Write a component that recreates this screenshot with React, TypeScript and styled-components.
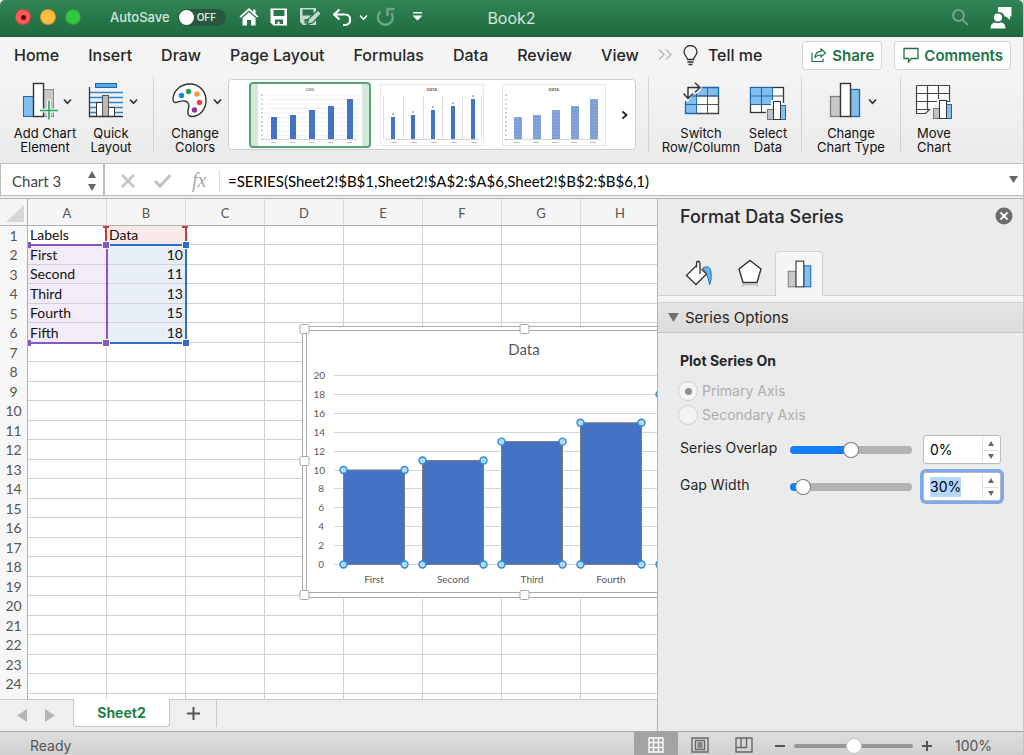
import React, { useEffect, useRef, useState } from "react";
import styled, { createGlobalStyle, css } from "styled-components";

const ui = `Inter, "Liberation Sans", sans-serif`;
const cellFont = `Lato, "Open Sans", sans-serif`;

const GlobalStyle = createGlobalStyle`
  * { box-sizing: border-box; }
  body { margin: 0; font-family: ${ui}; color: #262626; background: #ececec; }
  button, input { font: inherit; color: inherit; }
  button { padding: 0; border: 0; background: none; }
  svg { display: block; flex: none; }
`;

const Window = styled.div`
  display: flex;
  flex-direction: column;
  height: 100vh;
  border-right: 1px solid #c4c4c4;
  overflow: hidden;
`;

/* ---------- title bar ---------- */

const TitleBar = styled.header`
  display: grid;
  grid-template-columns: 1fr auto 1fr;
  align-items: center;
  flex: none;
  height: 37px;
  padding: 0 11px 2px;
  border-bottom: 1px solid #1c5a38;
  border-radius: 5px 5px 0 0;
  background: linear-gradient(#318455, #1f6a3f);
  color: #d5e6dc;
`;

const TitleGroup = styled.div<{ $end?: boolean }>`
  display: flex;
  align-items: center;
  justify-content: ${(p) => (p.$end ? "flex-end" : "flex-start")};
  gap: ${(p) => (p.$end ? 21 : 11)}px;
`;

const Lights = styled.div`
  display: flex;
  gap: 9px;
  margin: 0 18px 0 4px;
`;

const Light = styled.button<{ $color: string; $dot?: boolean }>`
  display: grid;
  place-items: center;
  width: 16px;
  height: 16px;
  border: 1px solid rgba(0, 0, 0, 0.2);
  border-radius: 50%;
  background: ${(p) => p.$color};
  &::after {
    content: "";
    width: 5px;
    height: 5px;
    border-radius: 50%;
    background: ${(p) => (p.$dot ? "#5c0a08" : "transparent")};
  }
`;

const AutoSave = styled.label`
  display: flex;
  align-items: center;
  gap: 8px;
  margin-right: 2px;
  font-size: 13px;
  font-weight: 500;
`;

const Switch = styled.span`
  position: relative;
  display: flex;
  align-items: center;
  width: 48px;
  height: 17px;
  padding-left: 19px;
  border-radius: 9px;
  background: #2a5740;
  font-size: 10px;
  font-weight: 600;
  input {
    position: absolute;
    inset: 0;
    margin: 0;
    opacity: 0;
  }
  &::before {
    content: "";
    position: absolute;
    left: 1px;
    top: 1px;
    width: 15px;
    height: 15px;
    border-radius: 50%;
    background: #fff;
  }
`;

const IconButton = styled.button`
  display: grid;
  place-items: center;
`;

const UndoGroup = styled.div`
  display: flex;
  align-items: center;
  gap: 8px;
`;

const DocTitle = styled.h1`
  margin: 0;
  padding-top: 2px;
  font-size: 16px;
  line-height: 20px;
  font-weight: 400;
`;

/* ---------- ribbon ---------- */

const TabRow = styled.nav`
  display: flex;
  align-items: center;
  flex: none;
  height: 38px;
  padding: 0 12px 2px 14px;
  background: #f4f4f4;
  font-size: 16px;
  font-weight: 500;
`;

const Tabs = styled.div`
  display: flex;
  align-items: center;
  gap: 29px;
  margin-right: 19px;
`;

const RibbonTab = styled.button`
  white-space: nowrap;
`;

const TellMe = styled.button`
  display: flex;
  align-items: center;
  gap: 10px;
  margin-left: 10px;
  white-space: nowrap;
`;

const Actions = styled.div`
  display: flex;
  gap: 12px;
  margin-left: auto;
`;

const ActionButton = styled.button`
  display: flex;
  align-items: center;
  gap: 5px;
  height: 29px;
  padding: 0 7px 0 8px;
  border: 1px solid #d4d4d4;
  border-radius: 4px;
  background: #fff;
  color: #217346;
  font-size: 15px;
  font-weight: 600;
`;

const Ribbon = styled.section`
  display: flex;
  flex: none;
  height: 89px;
  padding: 2px 12px 0;
  border-bottom: 1px solid #c0c0c0;
  background: linear-gradient(#f4f4f4, #eaeaea);
`;

const Tool = styled.button<{ $width: number }>`
  display: flex;
  flex-direction: column;
  align-items: center;
  flex: none;
  gap: 5px;
  width: ${(p) => p.$width}px;
  padding-top: 5px;
  font-size: 13px;
  line-height: 14px;
  color: #111;
`;

const ToolArt = styled.span<{ $menu?: boolean }>`
  display: flex;
  align-items: center;
  gap: 5px;
  height: 39px;
  padding-left: ${(p) => (p.$menu ? 4 : 0)}px;
`;

const ToolLabel = styled.span`
  white-space: pre;
`;

const Divider = styled.span`
  flex: none;
  width: 1px;
  height: 75px;
  margin: 0 9px;
  background: #d2d2d2;
`;

const Gallery = styled.div`
  display: flex;
  align-items: center;
  flex: 0 1 408px;
  height: 71px;
  margin: 2px 3px 0 1px;
  padding: 0 6px 0 20px;
  border: 1px solid #cfcfcf;
  border-radius: 4px;
  background: #fff;
`;

const Thumb = styled.button<{ $selected?: boolean }>`
  flex: none;
  width: 122px;
  height: 66px;
  padding: 0 8px;
  border: 1px solid transparent;
  border-radius: 4px;
  ${(p) =>
    p.$selected &&
    css`
      border: 2px solid #55a377;
      padding: 0 7px;
      background: #d3e7db;
    `}
  svg { background: #fff; }
`;

const MoreButton = styled(IconButton)`
  margin-left: auto;
  height: 100%;
`;

/* ---------- formula bar ---------- */

const FormulaBar = styled.div`
  display: flex;
  align-items: stretch;
  flex: none;
  height: 35px;
  padding-bottom: 3px;
  border-bottom: 1px solid #b4b4b4;
  background: linear-gradient(#fff 31px, #b9b9b9 31px, #b9b9b9 32px, #eee 32px);
`;

const NameBox = styled.div`
  display: flex;
  align-items: center;
  width: 105px;
  padding: 2px 6px 0 0;
  border-right: 2px solid #bdbdbd;
  border-left: 1px solid #bdbdbd;
`;

const NameInput = styled.input`
  flex: 1;
  min-width: 0;
  padding: 0 0 0 11px;
  border: 0;
  outline: 0;
  background: none;
  font-family: ${cellFont};
  font-size: 15px;
  color: #444;
`;

const FormulaTools = styled.div`
  display: flex;
  align-items: center;
  gap: 17px;
  width: 114px;
  padding: 2px 0 0 15px;
`;

const Fx = styled.button`
  padding-left: 2px;
  font-family: "Liberation Serif", serif;
  font-style: italic;
  font-size: 20px;
  color: #a9a9a9;
`;

const FormulaInput = styled.input`
  flex: 1;
  min-width: 0;
  height: 22px;
  margin-top: 6px;
  padding: 0 0 0 8px;
  border: 0;
  border-left: 1px solid #dcdcdc;
  outline: 0;
  background: none;
  font-family: ${cellFont};
  font-size: 15px;
  color: #000;
`;

const ExpandButton = styled(IconButton)`
  width: 20px;
`;

/* ---------- worksheet ---------- */

const Body = styled.main`
  display: flex;
  flex: 1;
  min-height: 0;
`;

const SheetColumn = styled.section`
  display: flex;
  flex-direction: column;
  flex: 1;
  min-width: 0;
`;

const SheetView = styled.div`
  position: relative;
  flex: 1;
  min-height: 0;
  overflow: hidden;
  background: #fff;
`;

const Grid = styled.table`
  width: 739px;
  table-layout: fixed;
  border-collapse: separate;
  border-spacing: 0;
  font-family: ${cellFont};
  font-size: 14px;
  line-height: 18px;
  color: #111;
  th, td { padding: 0; }
  thead tr { height: 27px; }
  thead th { padding-top: 2px; }
  tbody tr { height: 19px; }
  tbody tr:nth-child(even) { height: 20px; }
`;

const HeadCell = styled.th`
  border-right: 1px solid #dcdcdc;
  border-bottom: 1px solid #b0b0b0;
  background: #f5f5f5;
  font-size: 13px;
  font-weight: 400;
  color: #555;
  vertical-align: middle;
`;

const Corner = styled(HeadCell)`
  width: 28px;
  border-right-color: #b0b0b0;
  svg { margin: 0 0 0 6px; }
`;

const RowHead = styled.th`
  border-right: 1px solid #b0b0b0;
  background: #f7f7f7;
  font-size: 14px;
  line-height: 18px;
  font-weight: 400;
  color: #555;
`;

const fills = { red: "#f9e9e8", purple: "#f1ecf8", blue: "#e8eff9" };

const Cell = styled.td<{ $fill?: keyof typeof fills; $num?: boolean }>`
  border-right: 1px solid #d0d0d0;
  border-bottom: 1px solid #d0d0d0;
  background: ${(p) => (p.$fill ? fills[p.$fill] : "#fff")};
  text-align: ${(p) => (p.$num ? "right" : "left")};
  span { padding: 0 2px; }
`;

const Overlay = styled.svg`
  position: absolute;
  left: 0;
  top: 0;
  pointer-events: none;
`;

const ChartObject = styled.svg`
  position: absolute;
  left: 297px;
  top: 121px;
  font-family: ${cellFont};
  font-size: 10px;
  fill: #595959;
`;

const SheetTabs = styled.div`
  display: flex;
  align-items: flex-start;
  flex: none;
  height: 32px;
  padding-left: 17px;
  border-top: 1px solid #cacaca;
  background: #efefef;
`;

const SheetArrows = styled.div`
  display: flex;
  align-items: center;
  gap: 18px;
  width: 56px;
  height: 31px;
`;

const SheetTab = styled.button`
  width: 97px;
  height: 28px;
  margin-top: -1px;
  border: 1px solid #c4c4c4;
  border-top: 0;
  border-radius: 0 0 4px 4px;
  background: #fff;
  font-size: 14px;
  font-weight: 700;
  color: #1f7f4c;
`;

const AddSheet = styled.button`
  display: grid;
  place-items: center;
  width: 47px;
  height: 27px;
  border-right: 1px solid #cacaca;
`;

/* ---------- format pane ---------- */

const Pane = styled.aside`
  flex: none;
  width: 366px;
  border-left: 1px solid #b4b4b4;
  background: #ebebeb;
`;

const PaneHeader = styled.div`
  display: flex;
  align-items: center;
  justify-content: space-between;
  height: 34px;
  padding: 0 10px 0 22px;
  h2 {
    margin: 0;
    font-size: 18px;
    font-weight: 500;
  }
`;

const PaneTabs = styled.div`
  display: flex;
  align-items: flex-end;
  height: 63px;
  padding-left: 15px;
  border-bottom: 1px solid #cfcfcf;
`;

const PaneTab = styled.button<{ $active?: boolean }>`
  display: grid;
  place-items: center;
  width: ${(p) => (p.$active ? 48 : 51)}px;
  height: 44px;
  ${(p) =>
    p.$active &&
    css`
      height: 45px;
      margin-bottom: -1px;
      border: 1px solid #cfcfcf;
      border-bottom: 0;
      border-radius: 4px 4px 0 0;
      background: #f5f5f5;
    `}
`;

const SectionHeader = styled.button`
  display: flex;
  align-items: center;
  gap: 6px;
  width: 100%;
  height: 31px;
  margin-top: 6px;
  padding-left: 10px;
  border-top: 1px solid #cfcfcf;
  border-bottom: 1px solid #c6c6c6;
  background: linear-gradient(#e4e4e4, #dcdcdc);
  box-shadow: 0 -6px 0 #f3f3f3;
  font-size: 15px;
`;

const SectionBody = styled.div`
  padding: 18px 20px 0 22px;
  font-size: 14px;
  line-height: 20px;
`;

const RadioGroup = styled.fieldset`
  margin: 0 0 4px;
  padding: 0;
  border: 0;
  legend {
    margin-bottom: 8px;
    padding: 0;
    font-weight: 700;
  }
`;

const RadioLabel = styled.label`
  display: flex;
  align-items: center;
  gap: 4px;
  height: 24px;
  margin-left: -2px;
  color: #adadad;
`;

const Radio = styled.input`
  appearance: none;
  display: grid;
  place-items: center;
  width: 20px;
  height: 20px;
  margin: 0;
  border: 1px solid #cfcfcf;
  border-radius: 50%;
  background: #f4f4f4;
  &:checked::after {
    content: "";
    width: 7px;
    height: 7px;
    border-radius: 50%;
    background: #909090;
  }
`;

const SliderRow = styled.div`
  display: grid;
  grid-template-columns: 110px 122px 1fr;
  align-items: center;
  height: 37px;
`;

const FieldLabel = styled.label`
  padding-bottom: 4px;
`;

const Range = styled.input<{ $fill: number; $on: string; $off: string; $thick: number }>`
  appearance: none;
  width: 100%;
  height: 16px;
  margin: 0;
  background: none;
  &::-webkit-slider-runnable-track {
    height: ${(p) => p.$thick}px;
    border-radius: 4px;
    background: linear-gradient(
      to right,
      ${(p) => p.$on} ${(p) => p.$fill}%,
      ${(p) => p.$off} ${(p) => p.$fill}%
    );
  }
  &::-webkit-slider-thumb {
    appearance: none;
    width: 14px;
    height: 14px;
    margin-top: ${(p) => (p.$thick - 14) / 2}px;
    border-radius: 50%;
    background: #fff;
    box-shadow: 0 0 0 1px ${(p) => (p.$on === p.$off ? "#c8c8c8" : "#7c7c7c")};
  }
`;

const Stepper = styled.div<{ $active?: boolean }>`
  display: flex;
  align-items: center;
  justify-self: end;
  width: 78px;
  height: 29px;
  margin-right: 2px;
  padding: 0 2px 0 6px;
  border: 1px solid #b9b9b9;
  border-radius: 3px;
  background: #fff;
  box-shadow: ${(p) => (p.$active ? "0 0 0 3px #7ca9ee" : "none")};
`;

const StepInput = styled.input`
  flex: 1;
  min-width: 0;
  width: 0;
  padding: 0;
  border: 0;
  outline: 0;
  background: none;
  font-size: 14px;
  color: #000;
  &::selection { background: #b3d7ff; color: #000; }
`;

const StepButtons = styled.div`
  display: grid;
  grid-template-rows: 1fr 1fr;
  width: 16px;
  height: 25px;
  border-left: 1px solid #e0e0e0;
  button { display: grid; place-items: center; }
  button + button { border-top: 1px solid #e0e0e0; }
`;

/* ---------- status bar ---------- */

const StatusBar = styled.footer`
  display: flex;
  align-items: center;
  flex: none;
  height: 24px;
  padding: 4px 30px 0 30px;
  border-top: 1px solid #a6a6a6;
  background: linear-gradient(#dedede, #d0d0d0);
  font-size: 14px;
  color: #555;
`;

const Views = styled.div`
  display: flex;
  margin: -4px 9px 0 auto;
`;

const ViewButton = styled.button<{ $active?: boolean }>`
  display: grid;
  place-items: center;
  width: 44px;
  height: 23px;
  padding-top: 3px;
  background: ${(p) => (p.$active ? "#a3a3a3" : "none")};
`;

const ZoomGroup = styled.div`
  display: flex;
  align-items: center;
  gap: 9px;
`;

const ZoomTrack = styled.div`
  display: flex;
  width: 119px;
`;

const ZoomValue = styled.output`
  width: 38px;
  margin-left: 14px;
  white-space: nowrap;
`;

/* ---------- drawings ---------- */

const Chevron = ({ color = "#333", size = 9 }: { color?: string; size?: number }) => (
  <svg width={size} height={size} viewBox="0 0 9 9" fill="none" stroke={color} strokeWidth="1.7">
    <path d="M1 2.5 4.5 6.3 8 2.5" />
  </svg>
);

const Triangle = ({ dir, w = 10, h = 8, color = "#666" }: { dir: "up" | "down" | "left" | "right"; w?: number; h?: number; color?: string }) => {
  const d = {
    up: `M0 ${h}H${w}L${w / 2} 0Z`,
    down: `M0 0H${w}L${w / 2} ${h}Z`,
    left: `M${w} 0V${h}L0 ${h / 2}Z`,
    right: `M0 0V${h}L${w} ${h / 2}Z`,
  }[dir];
  return (
    <svg width={w} height={h} fill={color}>
      <path d={d} />
    </svg>
  );
};

const SmallBars = ({ x, y }: { x: number; y: number }) => (
  <g>
    <path d={`M${x - 1} ${y + 7}h5v-8h9v3h7v18h-21z`} fill="#f2f2f2" />
    <rect x={x + 0.5} y={y + 8.5} width="6" height="10" fill="#c1c1c1" stroke="#767676" />
    <rect x={x + 13.5} y={y + 4.5} width="5" height="14" fill="#83beec" stroke="#1769b5" />
    <rect x={x + 6.5} y={y + 0.5} width="7" height="18" fill="#fff" stroke="#333" />
  </g>
);

const AddElementIcon = () => (
  <svg width="36" height="39" viewBox="0 0 36 39">
    <rect x="1.5" y="14.5" width="10" height="20" fill="#83beec" stroke="#1769b5" />
    <rect x="21.5" y="7.5" width="10" height="27" fill="#c8c8c6" stroke="#8a8a88" />
    <rect x="11.5" y="1.5" width="10" height="33" fill="#fff" stroke="#333" strokeWidth="1.4" />
    <path d="M27 17.5v20M18 28.5h18" stroke="#f2f2f2" strokeWidth="4" />
    <path d="M27 18.5v19M18 28.5h18" stroke="#27a85a" strokeWidth="1.6" />
  </svg>
);

const QuickLayoutIcon = () => (
  <svg width="36" height="39" viewBox="0 0 36 39">
    <rect x="7.5" y="1.5" width="21" height="4" fill="#5ba7e0" stroke="#1769b5" />
    <path d="M2 10.5h33M2 15.5h33M2 20.5h33M2 25.5h33M2 30.5h33" stroke="#2b86cf" strokeWidth="1.3" />
    <rect x="8.5" y="20.5" width="6" height="14" fill="#fff" stroke="#333" />
    <rect x="20.5" y="25.5" width="6" height="9" fill="#fff" stroke="#333" />
    <rect x="14.5" y="13.5" width="6" height="21" fill="#b9b9b7" stroke="#555" />
    <path d="M1.5 5v29.5H35" fill="none" stroke="#333" strokeWidth="1.3" />
  </svg>
);

const PaletteIcon = () => (
  <svg width="36" height="39" viewBox="0 0 36 39">
    <path d="M18 2C8 2 1 9.500 1 17.500c0 2.500 1.500 3.300 3.500 2.800 2.800-.8 5.500-2 8.500-1.300 3.500.8 4.500 3.500 3.500 7-.8 3-1.500 8.500 3 8.500C28 34.500 34 27 34 18.500 34 9 27 2 18 2Z" fill="#fff" stroke="#333" strokeWidth="1.4" />
    <circle cx="9.5" cy="13.5" r="2.7" fill="#1b86d6" />
    <circle cx="16.5" cy="9.5" r="2.7" fill="#1fa552" />
    <circle cx="25" cy="12" r="2.7" fill="#f79646" />
    <circle cx="27.5" cy="20.5" r="2.7" fill="#ee4040" />
    <circle cx="22.5" cy="28" r="2.7" fill="#93359a" />
  </svg>
);

const SwitchIcon = () => (
  <svg width="38" height="39" viewBox="0 0 38 39">
    <rect x="3.5" y="5.5" width="33" height="26" fill="#fff" />
    <path d="M3.5 5.5h33v8.500h-22v17.500h-11z" fill="#83beec" />
    <path d="M14.5 5.5v26M25.5 5.5v26M3.5 14h33M3.5 22.5h33" stroke="#555" />
    <path d="M14.5 5.5v26M3.5 22.5h11M25.5 5.5v8.500M14.5 14h22" stroke="#1769b5" />
    <path d="M14.5 31.500h22V14" fill="none" stroke="#444" strokeWidth="1.3" />
    <path d="M36.500 14V5.500H16M14.500 31.500h-11V14" fill="none" stroke="#1769b5" strokeWidth="1.3" />
    <path d="M0 0h17l3 5-3 6-6 1-5 8-6-2z" fill="#f2f2f2" />
    <path d="M6 16V5.500h12M1.500 11.500l4.500 5 5-5M13 .8l5 4.700-5 4.700" fill="none" stroke="#333" strokeWidth="1.4" />
  </svg>
);

const SelectDataIcon = () => (
  <svg width="38" height="39" viewBox="0 0 38 39">
    <rect x="1.5" y="5.5" width="33" height="25" fill="#fff" stroke="#333" strokeWidth="1.3" />
    <rect x="1.5" y="5.5" width="22" height="17" fill="#83beec" />
    <path d="M12.5 22v8.500M23.5 5.5v25M23.5 14h11M1.5 22.5h33" stroke="#444" />
    <path d="M1.5 5.5h22v17h-22zM12.5 5.5v17M1.5 14h22" fill="none" stroke="#1769b5" />
    <SmallBars x={18} y={19} />
  </svg>
);

const MoveChartIcon = () => (
  <svg width="38" height="39" viewBox="0 0 38 39">
    <path d="M1.5 3.5h33v21h-20l-4 7h-9z" fill="#fff" />
    <path d="M1.5 3.5h33V28M1.5 3.5v28h9l4-4H1.5M12.5 3.5v24M23.5 3.5v23M1.500 11.500h33M1.500 19.500h33" fill="none" stroke="#444" strokeWidth="1.2" />
    <SmallBars x={18} y={18} />
  </svg>
);

const ChartTypeIcon = ({ small }: { small?: boolean }) => (
  <svg width={small ? 25 : 34} height={small ? 28 : 39} viewBox={small ? "0 0 32 36" : "0 0 34 39"}>
    <rect x="1.5" y="14.5" width="10" height="20" fill="#c8c8c6" stroke="#7d7d7b" strokeWidth="1.3" />
    <rect x="21.5" y="7.5" width="9" height="27" fill="#83beec" stroke="#1769b5" strokeWidth="1.3" />
    <rect x="11.5" y="1.5" width="10" height="33" fill="#fff" stroke="#333" strokeWidth="1.4" />
  </svg>
);

const thumbHeights = [22, 24, 29, 33, 40];

const StyleThumb = ({ kind }: { kind: "plain" | "drop" | "striped" }) => {
  const first = kind === "plain" ? 13 : kind === "drop" ? 11 : 12;
  const pitch = kind === "drop" ? 20 : 19;
  const width = kind === "plain" ? 6 : kind === "drop" ? 4 : 8;
  return (
    <svg width="104" height="62" viewBox="0 0 104 62">
      <rect x="0.5" y="0.5" width="103" height="61" fill="#fff" stroke={kind === "plain" ? "#fff" : "#e6e6e6"} />
      <text x="52" y="7" textAnchor="middle" fontSize="4" fontWeight={kind === "plain" ? 400 : 700} fill="#666">
        {kind === "plain" ? "Data" : "DATA"}
      </text>
      {kind === "plain" &&
        Array.from({ length: 11 }, (_, i) => <path key={i} d={`M8 ${11 + i * 4.5}h94`} stroke="#e8e8e8" strokeWidth="0.6" />)}
      {kind !== "drop" &&
        Array.from({ length: 11 }, (_, i) => <rect key={i} x="3" y={10.5 + i * 4.4} width="2" height="1.5" fill="#c4c4c4" />)}
      {kind === "drop" && [3, 23, 43, 62, 82, 101].map((x) => <path key={x} d={`M${x}.5 12v43`} stroke="#dedede" />)}
      {thumbHeights.map((h, i) => {
        const x = first + i * pitch;
        return (
          <g key={i}>
            <rect x={x} y={55 - h} width={width} height={h} fill={kind === "striped" ? "#89a6da" : "#4472c4"} />
            {kind === "striped" &&
              Array.from({ length: Math.floor(h / 3) }, (_, k) => (
                <path key={k} d={`M${x} ${54 - k * 3}h${width}`} stroke="#6f93d2" strokeWidth="0.8" />
              ))}
            {kind === "drop" && <rect x={x + 1} y={51 - h} width="2" height="2" fill="#b5b5b5" />}
            <rect x={x} y="58" width={kind === "plain" ? 5 : 6} height="1" fill="#bdbdbd" />
          </g>
        );
      })}
      <path d="M5 55.500h94" stroke="#d5d5d5" />
    </svg>
  );
};

/* ---------- data ---------- */

const columns = ["A", "B", "C", "D", "E", "F", "G", "H", ""];
const data: [string, number][] = [
  ["First", 10],
  ["Second", 11],
  ["Third", 13],
  ["Fourth", 15],
  ["Fifth", 18],
];
const menuTabs = ["Home", "Insert", "Draw", "Page Layout", "Formulas", "Data", "Review", "View"];

const Handle = ({ x, y, color }: { x: number; y: number; color: string }) => (
  <rect x={x - 3.5} y={y - 3.5} width="7" height="7" fill={color} stroke="#fff" />
);

const RangeMarks = () => (
  <Overlay width="200" height="160">
    <path d="M103 28h6M106 28v14M182 28h6M186 28v14" stroke="#c23a45" strokeWidth="2" fill="none" />
    <path d="M29 46h78M107 46v98M29 144h78" stroke="#8458bd" strokeWidth="2" fill="none" />
    <path d="M107 46h79v98h-79" stroke="#326cc9" strokeWidth="2" fill="none" />
    <rect x="28" y="43" width="3" height="6" fill="#8458bd" />
    <rect x="28" y="141" width="3" height="6" fill="#8458bd" />
    <Handle x={106} y={46} color="#8458bd" />
    <Handle x={106} y={144} color="#8458bd" />
    <Handle x={186} y={46} color="#326cc9" />
    <Handle x={186} y={144} color="#326cc9" />
  </Overlay>
);

const SeriesChart = () => {
  const base = 244;
  const unit = 9.45;
  return (
    <ChartObject width="456" height="284">
      <rect x="5.5" y="6.5" width="444" height="271" fill="#fff" stroke="#ababab" />
      <rect x="9.5" y="10.5" width="436" height="262" fill="#fff" stroke="#ababab" />
      <text x="227" y="35" textAnchor="middle" fontSize="15">Data</text>
      {Array.from({ length: 11 }, (_, i) => (
        <g key={i}>
          <path d={`M37 ${Math.round(base - i * 2 * unit) + 0.5}h395`} stroke="#d6d6d6" />
          <text x={i > 4 ? 28 : 27} y={Math.round(base - i * 2 * unit) + 4} textAnchor="end">{i * 2}</text>
        </g>
      ))}
      {data.map(([name, value], i) => {
        const x = 46.5 + i * 79;
        const top = base - value * unit + 0.5;
        return (
          <g key={name}>
            <rect x={x} y={top} width="61" height={value * unit} fill="#4472c4" stroke="#7a7a78" />
            {i < 4 && <text x={x + 30.5} y="263" textAnchor="middle">{name}</text>}
            {[
              [x, top],
              [x + 61, top],
              [x, base + 0.5],
              [x + 61, base + 0.5],
            ].map(([cx, cy], k) => (
              <circle key={k} cx={cx} cy={cy} r="3.5" fill="#b5d8f1" stroke="#2a8ad8" strokeWidth="1.4" />
            ))}
          </g>
        );
      })}
      {[
        [7.5, 9],
        [227.5, 9],
        [7.5, 141],
        [7.5, 275],
        [227.5, 275],
      ].map(([x, y]) => (
        <rect key={`${x}-${y}`} x={x - 4.5} y={y - 4.5} width="9" height="9" rx="1.5" fill="#fff" stroke="#a8a8a8" />
      ))}
    </ChartObject>
  );
};

const Worksheet = () => (
  <SheetView>
    <Grid>
      <colgroup>
        <col style={{ width: 28 }} />
        {columns.map((_, i) => (
          <col key={i} />
        ))}
      </colgroup>
      <thead>
        <tr>
          <Corner>
            <svg width="19" height="19" fill="#d6d6d6">
              <path d="M18 1v17H0z" />
            </svg>
          </Corner>
          {columns.map((c, i) => (
            <HeadCell key={i} scope="col">{c}</HeadCell>
          ))}
        </tr>
      </thead>
      <tbody>
        {Array.from({ length: 25 }, (_, r) => {
          const row = data[r - 1];
          return (
            <tr key={r}>
              <RowHead scope="row">{r + 1}</RowHead>
              {columns.map((_, c) => {
                if (c === 0 && r === 0) return <Cell key={c}><span>Labels</span></Cell>;
                if (c === 1 && r === 0) return <Cell key={c} $fill="red"><span>Data</span></Cell>;
                if (c === 0 && row) return <Cell key={c} $fill="purple"><span>{row[0]}</span></Cell>;
                if (c === 1 && row) return <Cell key={c} $fill="blue" $num><span>{row[1]}</span></Cell>;
                return <Cell key={c} />;
              })}
            </tr>
          );
        })}
      </tbody>
    </Grid>
    <RangeMarks />
    <SeriesChart />
  </SheetView>
);

const PercentField = ({ id, label, initial, max, min, active }: { id: string; label: string; initial: number; min: number; max: number; active?: boolean }) => {
  const [value, setValue] = useState(initial);
  const ref = useRef<HTMLInputElement>(null);
  useEffect(() => {
    if (active) {
      ref.current?.focus();
      ref.current?.select();
    }
  }, [active]);
  const clamp = (n: number) => Math.max(min, Math.min(max, n));
  return (
    <SliderRow>
      <FieldLabel htmlFor={id}>{label}</FieldLabel>
      <Range
        type="range"
        aria-label={`${label} slider`}
        min={min}
        max={max}
        value={value}
        onChange={(e) => setValue(Number(e.target.value))}
        $fill={((value - min) / (max - min)) * 100}
        $on="#147efb"
        $off="#b3b3b3"
        $thick={8}
      />
      <Stepper $active={active}>
        <StepInput ref={ref} id={id} value={`${value}%`} onChange={(e) => setValue(clamp(parseInt(e.target.value, 10) || 0))} />
        <StepButtons>
          <button aria-label={`Increase ${label}`} onClick={() => setValue(clamp(value + 1))}>
            <Triangle dir="up" w={6} h={5} />
          </button>
          <button aria-label={`Decrease ${label}`} onClick={() => setValue(clamp(value - 1))}>
            <Triangle dir="down" w={6} h={5} />
          </button>
        </StepButtons>
      </Stepper>
    </SliderRow>
  );
};

const FormatPane = () => (
  <Pane>
    <PaneHeader>
      <h2>Format Data Series</h2>
      <IconButton aria-label="Close pane">
        <svg width="18" height="18">
          <circle cx="9" cy="9" r="8.5" fill="#6c6c6c" />
          <path d="M5.5 5.5l7 7M12.500 5.500l-7 7" stroke="#fff" strokeWidth="1.8" />
        </svg>
      </IconButton>
    </PaneHeader>
    <PaneTabs>
      <PaneTab aria-label="Fill and line">
        <svg width="28" height="28" fill="none">
          <path d="M18 9c5-3 8 0 8 5 .5 5 0 8-1.500 11.500-.8-4-1.500-8-3.500-11-1-1.500-2-4-3-5.500z" fill="#6db3e8" stroke="#1769b5" />
          <path d="M11.500 6.500 1.500 16.500l9.500 9L21.500 15l-5-5" fill="#fff" />
          <path d="M11.500 6.500 1.500 16.500l9.500 9L21.500 15l-5-5M15 15V4.500c0-3-3.500-3-3.500 0v4" stroke="#333" strokeWidth="1.3" />
        </svg>
      </PaneTab>
      <PaneTab aria-label="Effects">
        <svg width="26" height="30" fill="none">
          <path d="M13 2.500 24 11l-4 13.500H6L2 11z" fill="#fff" stroke="#333" strokeWidth="1.4" />
          <path d="M5 28.500l1.500-2h13l1.500 2" stroke="#bbb" strokeWidth="1.5" />
        </svg>
      </PaneTab>
      <PaneTab $active aria-label="Series options">
        <ChartTypeIcon small />
      </PaneTab>
    </PaneTabs>
    <SectionHeader>
      <Triangle dir="down" w={11} h={9} color="#707070" />
      Series Options
    </SectionHeader>
    <SectionBody>
      <RadioGroup disabled>
        <legend>Plot Series On</legend>
        <RadioLabel>
          <Radio type="radio" name="axis" defaultChecked />
          Primary Axis
        </RadioLabel>
        <RadioLabel>
          <Radio type="radio" name="axis" />
          Secondary Axis
        </RadioLabel>
      </RadioGroup>
      <PercentField id="overlap" label="Series Overlap" initial={0} min={-100} max={100} />
      <PercentField id="gap" label="Gap Width" initial={30} min={0} max={500} active />
    </SectionBody>
  </Pane>
);

const tool = (label: string, width: number, icon: React.ReactNode, menu = false) => (
  <Tool $width={width}>
    <ToolArt $menu={menu}>
      {icon}
      {menu && <Chevron />}
    </ToolArt>
    <ToolLabel>{label}</ToolLabel>
  </Tool>
);

export default function App() {
  return (
    <Window>
      <GlobalStyle />
      <TitleBar>
        <TitleGroup>
          <Lights>
            <Light $color="#fc5b57" $dot aria-label="Close" />
            <Light $color="#fdbc40" aria-label="Minimize" />
            <Light $color="#2fc840" aria-label="Zoom window" />
          </Lights>
          <AutoSave>
            AutoSave
            <Switch>
              <input type="checkbox" aria-label="AutoSave" />
              OFF
            </Switch>
          </AutoSave>
          <IconButton aria-label="Home">
            <svg width="20" height="20" fill="#fff">
              <path d="M10 1 .5 9.500l1.200 1.300L10 3.500l8.300 7.300 1.200-1.300L16.500 6.800V2.500h-2.300v2.200z" />
              <path d="M10 5.300 3.500 11v7.500H8V13h4v5.500h4.500V11z" />
            </svg>
          </IconButton>
          <IconButton aria-label="Save">
            <svg width="18" height="18">
              <path d="M1 .5h16v17H3.500L.500 14.500V.500z" fill="#fff" />
              <path d="M3.500 2h11v6h-11zM5 11.500h8V16H9.500v-2.500h-2V16H5z" fill="#28754a" />
            </svg>
          </IconButton>
          <IconButton aria-label="Save as">
            <svg width="23" height="20" fill="none">
              <path d="M1 1h16v17H4l-3-3z" fill="#c3dacd" />
              <path d="M3.500 2.500h11v6h-11zM5.500 12h7v4.500H9V14H7.500v2.500h-2z" fill="#27744a" />
              <path d="M8 17.500l1.500-5.500L19 3l3.500 3.500L13.500 16z" fill="#c3dacd" stroke="#27744a" strokeWidth="1.4" />
            </svg>
          </IconButton>
          <UndoGroup>
            <IconButton aria-label="Undo">
              <svg width="18" height="19" viewBox="1 0 18 19" fill="none" stroke="#fff" strokeWidth="2.2">
                <path d="M7.5 1.500 2 6.500l5.500 5M2.500 6.500H13c7 0 7 10.500 0 10.500h-2" />
              </svg>
            </IconButton>
            <IconButton aria-label="Undo history">
              <Chevron color="#fff" />
            </IconButton>
            <IconButton aria-label="Redo">
              <svg width="20" height="20" fill="none" stroke="#6fa987" strokeWidth="2.3">
                <path d="M4.500 4.500a7.500 7.500 0 1 0 11 1.500M11.500 9V2H18.500" />
              </svg>
            </IconButton>
          </UndoGroup>
          <IconButton aria-label="Customize toolbar">
            <svg width="20" height="12" fill="#fff">
              <path d="M6 1h9v1.500H6zM5.500 4.500h10l-5 5z" />
            </svg>
          </IconButton>
        </TitleGroup>
        <DocTitle>Book2</DocTitle>
        <TitleGroup $end>
          <IconButton aria-label="Search">
            <svg width="17" height="17" fill="none" stroke="#83b196" strokeWidth="1.5">
              <circle cx="6.5" cy="6.5" r="5.5" />
              <path d="M10.5 10.500 16 16" />
            </svg>
          </IconButton>
          <IconButton aria-label="Account">
            <svg width="22" height="23" fill="#fff">
              <path d="M8 1h13.500v9.500H20V14l-4-3.500h-1.500C14 7 11 5.500 8 6z" />
              <circle cx="8" cy="11.5" r="4" />
              <path d="M.5 22.500c0-4 2.500-6 4.500-6 2 1 4 1 6 0 2.500 0 4.500 2 4.500 6z" />
            </svg>
          </IconButton>
        </TitleGroup>
      </TitleBar>

      <TabRow>
        <Tabs>
          {menuTabs.map((t) => (
            <RibbonTab key={t}>{t}</RibbonTab>
          ))}
        </Tabs>
        <IconButton aria-label="More tabs">
          <svg width="15" height="14" fill="none" stroke="#b9b9b9" strokeWidth="1.5">
            <path d="M1 1.500 6 6.500 1 11.500M8 1.500l5 5-5 5" />
          </svg>
        </IconButton>
        <TellMe>
          <svg width="15" height="21" fill="none" stroke="#333" strokeWidth="1.3">
            <path d="M4.500 14.500C4.500 12 1 10.500 1 7a6.300 6.300 0 0 1 13 0c0 3.500-3.500 5-3.500 7.500zM4.500 17h6M5.500 19.500h4" />
          </svg>
          Tell me
        </TellMe>
        <Actions>
          <ActionButton>
            <svg width="16" height="16" fill="none" stroke="#217346" strokeWidth="1.2">
              <path d="M1 5.500v9h11v-3M10 2l4.500 4-4.500 4V8C7 8 5 9 4 11c0-4 2-6.500 6-6.700z" />
            </svg>
            Share
          </ActionButton>
          <ActionButton>
            <svg width="16" height="16" fill="none" stroke="#217346" strokeWidth="1.3">
              <path d="M1 1.500h14v10H8.500L5.500 15v-3.500H1z" />
            </svg>
            Comments
          </ActionButton>
        </Actions>
      </TabRow>

      <Ribbon>
        {tool("Add Chart\nElement", 66, <AddElementIcon />, true)}
        {tool("Quick\nLayout", 66, <QuickLayoutIcon />, true)}
        <Divider />
        {tool("Change\nColors", 64, <PaletteIcon />, true)}
        <Gallery>
          <Thumb $selected aria-label="Style 1"><StyleThumb kind="plain" /></Thumb>
          <Thumb aria-label="Style 2"><StyleThumb kind="drop" /></Thumb>
          <Thumb aria-label="Style 3"><StyleThumb kind="striped" /></Thumb>
          <MoreButton aria-label="More styles">
            <svg width="8" height="10" fill="none" stroke="#222" strokeWidth="1.8">
              <path d="M1.500 1.500 5.500 5l-4 3.500" />
            </svg>
          </MoreButton>
        </Gallery>
        <Divider />
        {tool("Switch\nRow/Column", 86, <SwitchIcon />)}
        {tool("Select\nData", 48, <SelectDataIcon />)}
        <Divider />
        {tool("Change\nChart Type", 80, <ChartTypeIcon />, true)}
        <Divider />
        {tool("Move\nChart", 48, <MoveChartIcon />)}
      </Ribbon>

      <FormulaBar>
        <NameBox>
          <NameInput aria-label="Name box" defaultValue="Chart 3" />
          <svg width="10" height="22" fill="#666">
            <path d="M1 8h8L5 1zM1 14h8l-4 7z" />
          </svg>
        </NameBox>
        <FormulaTools>
          <IconButton aria-label="Cancel">
            <svg width="16" height="16" stroke="#c4c4c4" strokeWidth="2.5">
              <path d="M2 2l12 12M14 2 2 14" />
            </svg>
          </IconButton>
          <IconButton aria-label="Enter">
            <svg width="20" height="16" fill="none" stroke="#c4c4c4" strokeWidth="3">
              <path d="M2 8l5 5L17.500 2" />
            </svg>
          </IconButton>
          <Fx>fx</Fx>
        </FormulaTools>
        <FormulaInput aria-label="Formula" defaultValue="=SERIES(Sheet2!$B$1,Sheet2!$A$2:$A$6,Sheet2!$B$2:$B$6,1)" />
        <ExpandButton aria-label="Expand formula bar">
          <Triangle dir="down" w={9} h={7} />
        </ExpandButton>
      </FormulaBar>

      <Body>
        <SheetColumn>
          <Worksheet />
          <SheetTabs>
            <SheetArrows>
              <IconButton aria-label="Previous sheet">
                <Triangle dir="left" w={10} h={13} color="#b5b5b5" />
              </IconButton>
              <IconButton aria-label="Next sheet">
                <Triangle dir="right" w={10} h={13} color="#b5b5b5" />
              </IconButton>
            </SheetArrows>
            <SheetTab>Sheet2</SheetTab>
            <AddSheet aria-label="Add sheet">
              <svg width="13" height="13" stroke="#555" strokeWidth="2">
                <path d="M6.500 0v13M0 6.500h13" />
              </svg>
            </AddSheet>
          </SheetTabs>
        </SheetColumn>
        <FormatPane />
      </Body>

      <StatusBar>
        Ready
        <Views>
          <ViewButton $active aria-label="Normal view">
            <svg width="16" height="16" fill="none" stroke="#fff" strokeWidth="1.4">
              <path d="M1 1h14v14H1zM5.500 1v14M10.500 1v14M1 5.500h14M1 10.500h14" />
            </svg>
          </ViewButton>
          <ViewButton aria-label="Page layout view">
            <svg width="18" height="16" fill="none" stroke="#666" strokeWidth="1.4">
              <path d="M1 1h16v14H1zM4.500 3.500h9v9h-9zM6.500 6h5M6.500 8h5M6.500 10h5" />
            </svg>
          </ViewButton>
          <ViewButton aria-label="Page break view">
            <svg width="18" height="16" fill="none" stroke="#666" strokeWidth="1.4">
              <path d="M1 1h16v14H1zM6 1v9.500M11.500 1v9.500M1 10.500h10.500" />
            </svg>
          </ViewButton>
        </Views>
        <ZoomGroup>
          <IconButton aria-label="Zoom out">
            <svg width="10" height="10" stroke="#555" strokeWidth="2">
              <path d="M0 5h10" />
            </svg>
          </IconButton>
          <ZoomTrack>
            <Range type="range" aria-label="Zoom" min={0} max={100} defaultValue={50} $fill={50} $on="#979797" $off="#979797" $thick={4} />
          </ZoomTrack>
          <IconButton aria-label="Zoom in">
            <svg width="10" height="10" stroke="#555" strokeWidth="2">
              <path d="M0 5h10M5 0v10" />
            </svg>
          </IconButton>
          <ZoomValue>100%</ZoomValue>
        </ZoomGroup>
      </StatusBar>
    </Window>
  );
}
